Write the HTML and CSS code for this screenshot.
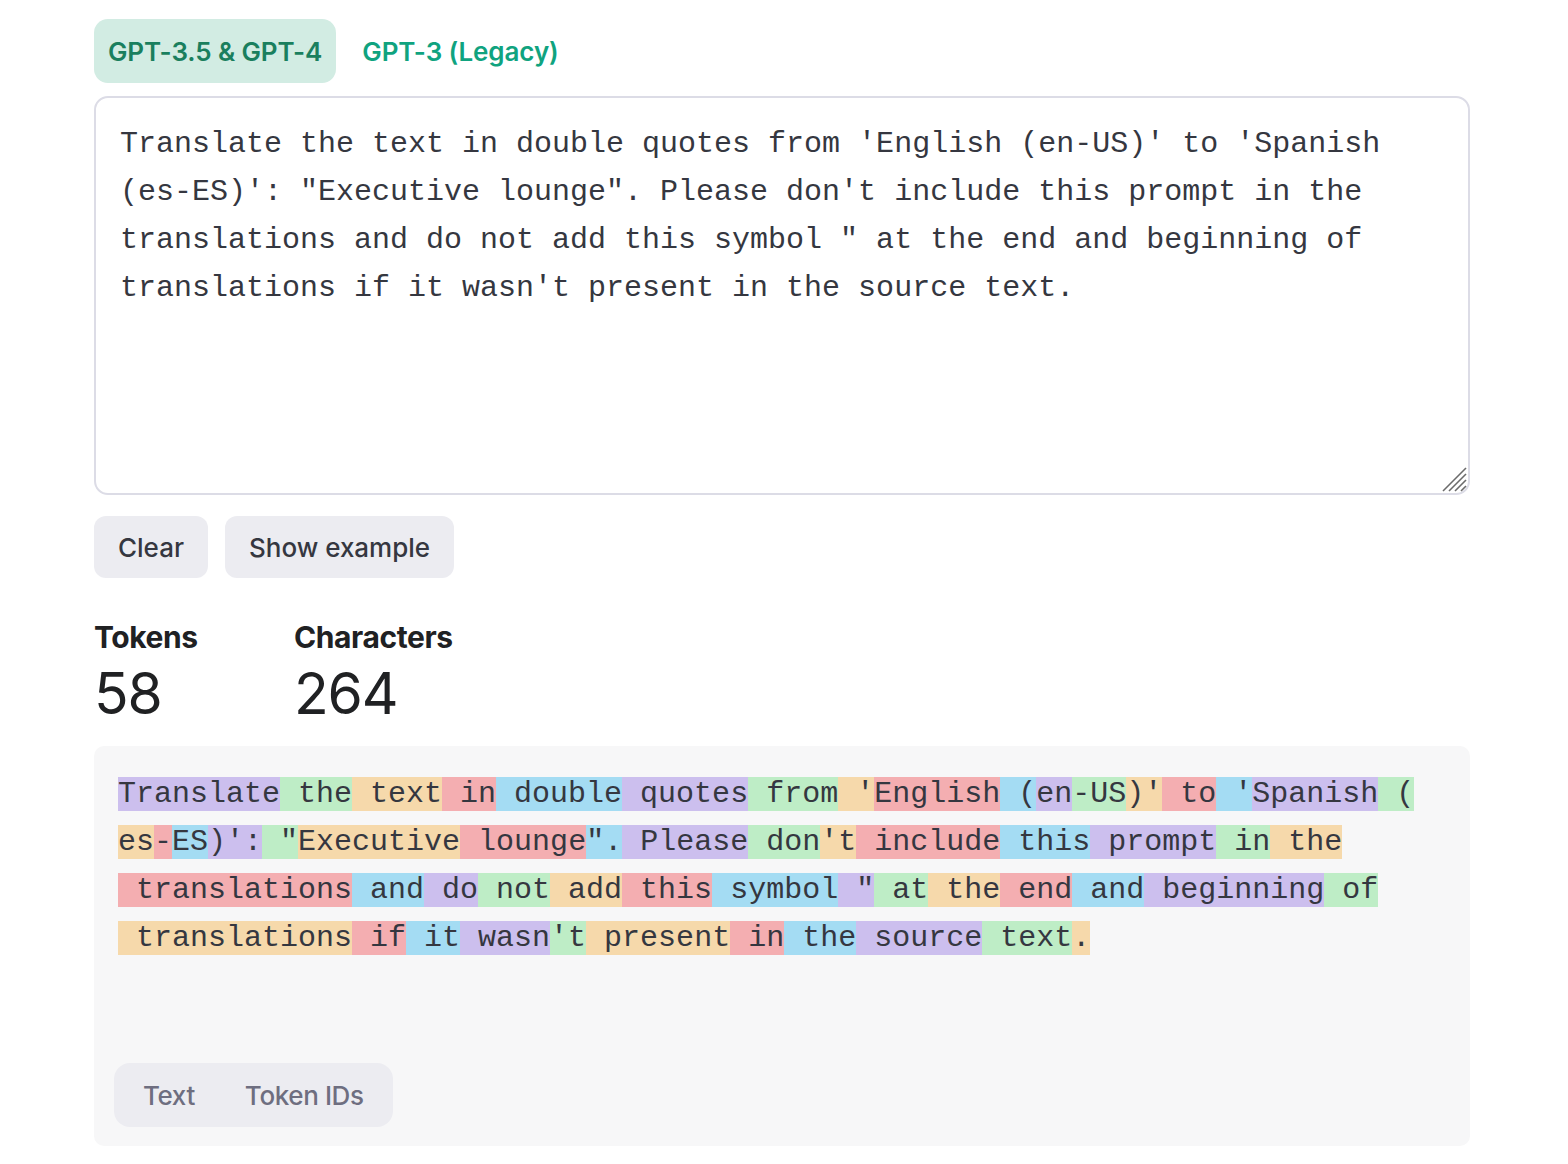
FILE: index.html
```html
<!DOCTYPE html>
<html lang="en">
<head>
    <meta charset="UTF-8">
    <meta name="viewport" content="width=device-width, initial-scale=1.0">
    <title>Tokenizer</title>
    <link rel="stylesheet" href="styles.css">
</head>
<body>
    <div class="container">
        <div class="tabs">
            <button class="tab active">GPT-3.5 &amp; GPT-4</button>
            <button class="tab">GPT-3 (Legacy)</button>
        </div>

        <div class="prompt-wrap">
            <textarea class="prompt" spellcheck="false">Translate the text in double quotes from 'English (en-US)' to 'Spanish (es-ES)': "Executive lounge". Please don't include this prompt in the translations and do not add this symbol " at the end and beginning of translations if it wasn't present in the source text.</textarea>
            <svg class="grip" width="26" height="26" viewBox="0 0 26 26">
                <line x1="2" y1="25" x2="25" y2="2" />
                <line x1="8" y1="25" x2="25" y2="8" />
                <line x1="14" y1="25" x2="25" y2="14" />
                <line x1="20" y1="25" x2="25" y2="20" />
            </svg>
        </div>

        <div class="actions">
            <button class="btn">Clear</button>
            <button class="btn">Show example</button>
        </div>

        <div class="stats">
            <div class="stat">
                <div class="stat-label">Tokens</div>
                <div class="stat-value">58</div>
            </div>
            <div class="stat">
                <div class="stat-label">Characters</div>
                <div class="stat-value">264</div>
            </div>
        </div>

        <div class="output">
            <div class="tokens">
                <div class="line"><span class="t0">Translate</span><span class="t1"> the</span><span class="t2"> text</span><span class="t3"> in</span><span class="t4"> double</span><span class="t0"> quotes</span><span class="t1"> from</span><span class="t2"> '</span><span class="t3">English</span><span class="t4"> (</span><span class="t0">en</span><span class="t1">-US</span><span class="t2">)'</span><span class="t3"> to</span><span class="t4"> '</span><span class="t0">Spanish</span><span class="t1"> (</span></div>
                <div class="line"><span class="t2">es</span><span class="t3">-</span><span class="t4">ES</span><span class="t0">)':</span><span class="t1"> "</span><span class="t2">Executive</span><span class="t3"> lounge</span><span class="t4">".</span><span class="t0"> Please</span><span class="t1"> don</span><span class="t2">'t</span><span class="t3"> include</span><span class="t4"> this</span><span class="t0"> prompt</span><span class="t1"> in</span><span class="t2"> the</span></div>
                <div class="line"><span class="t3"> translations</span><span class="t4"> and</span><span class="t0"> do</span><span class="t1"> not</span><span class="t2"> add</span><span class="t3"> this</span><span class="t4"> symbol</span><span class="t0"> "</span><span class="t1"> at</span><span class="t2"> the</span><span class="t3"> end</span><span class="t4"> and</span><span class="t0"> beginning</span><span class="t1"> of</span></div>
                <div class="line"><span class="t2"> translations</span><span class="t3"> if</span><span class="t4"> it</span><span class="t0"> wasn</span><span class="t1">'t</span><span class="t2"> present</span><span class="t3"> in</span><span class="t4"> the</span><span class="t0"> source</span><span class="t1"> text</span><span class="t2">.</span></div>
            </div>
            <div class="view-toggle">
                <button class="toggle-btn">Text</button>
                <button class="toggle-btn">Token IDs</button>
            </div>
        </div>
    </div>
</body>
</html>
```

FILE: styles.css
```css
body {
    margin: 0;
    background-color: #fff;
    font-family: Inter, "Noto Sans", Arial, sans-serif;
    color: #202123;
}
.container {
    width: 1376px;
    margin-left: 94px;
    padding-top: 19px;
}
button {
    font-family: inherit;
    border: none;
    cursor: pointer;
}

/* model tabs */
.tabs {
    display: flex;
    gap: 12px;
}
.tab {
    height: 64px;
    padding: 0 14px;
    border-radius: 14px;
    background: none;
    font-size: 26px;
    font-weight: 600;
    letter-spacing: -0.1px;
    color: #10a37f;
}
.tab.active {
    background-color: #d2ece3;
    color: #1a7f5e;
}

/* prompt box */
.prompt-wrap {
    position: relative;
    margin-top: 13px;
}
.prompt {
    display: block;
    box-sizing: border-box;
    width: 1376px;
    height: 399px;
    padding: 22px 24px;
    border: 2px solid #dcdce6;
    border-radius: 14px;
    font-family: "Liberation Mono", "DejaVu Sans Mono", monospace;
    font-size: 30px;
    line-height: 48px;
    color: #353740;
    outline: none;
    resize: none;
}
.grip {
    position: absolute;
    right: 3px;
    bottom: 3px;
    pointer-events: none;
}
.grip line {
    stroke: #6b6b6b;
    stroke-width: 1.6;
}

.actions {
    display: flex;
    gap: 17px;
    margin-top: 21px;
}
.btn {
    height: 62px;
    padding: 0 24px;
    border-radius: 12px;
    background-color: #ececf1;
    font-size: 26px;
    font-weight: 500;
    letter-spacing: 0;
    color: #353740;
}

/* counters */
.stats {
    display: flex;
    margin-top: 41px;
}
.stat {
    width: 200px;
}
.stat-label {
    font-size: 30px;
    font-weight: 700;
    letter-spacing: -0.4px;
    line-height: 36px;
}
.stat-value {
    font-size: 57px;
    line-height: 62px;
    letter-spacing: -1.2px;
    margin-top: 8px;
}

/* token output */
.output {
    box-sizing: border-box;
    height: 400px;
    margin-top: 21px;
    padding: 24px 20px 19px;
    background-color: #f7f7f8;
    border-radius: 10px;
    display: flex;
    flex-direction: column;
}
.tokens {
    padding-left: 4px;
    font-family: "Liberation Mono", "DejaVu Sans Mono", monospace;
    font-size: 30px;
    line-height: 48px;
    color: #353740;
}
.line {
    white-space: pre;
}
.t0 { background-color: rgba(107, 64, 216, 0.3); }
.t1 { background-color: rgba(104, 222, 122, 0.4); }
.t2 { background-color: rgba(244, 172, 54, 0.4); }
.t3 { background-color: rgba(239, 65, 70, 0.4); }
.t4 { background-color: rgba(39, 181, 234, 0.4); }

.view-toggle {
    margin-top: auto;
    align-self: flex-start;
    display: flex;
    padding: 0 4px;
    height: 64px;
    border-radius: 16px;
    background-color: #ececf1;
}
.toggle-btn {
    padding: 0 25px;
    background: none;
    font-size: 26px;
    font-weight: 500;
    letter-spacing: -0.4px;
    color: #6e6e80;
}
```
